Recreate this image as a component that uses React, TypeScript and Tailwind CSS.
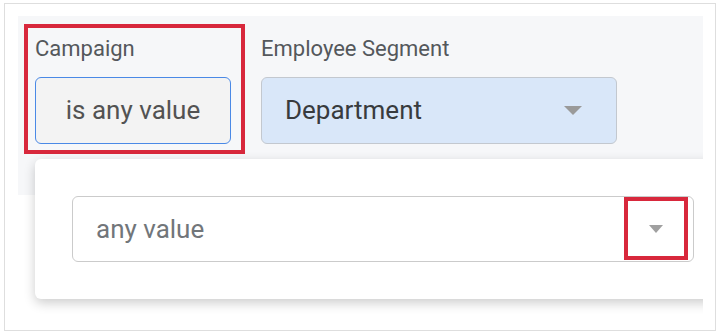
export default function App() {
  const font = { fontFamily: "Roboto, 'Noto Sans', sans-serif" };
  return (
    <div className="w-[720px] h-[334px] bg-white pt-[3px] pl-[4px]" style={font}>
      <div className="w-[712px] h-[328px] border border-[#dedede] pt-[12px] pl-[13px]">
        <div className="relative w-[685px] h-[304px] overflow-hidden bg-white">
          {/* gray filter bar */}
          <div className="h-[179px] bg-[#f6f7f9] pt-[8px] pl-[6px] flex items-start gap-[16px]">
            {/* Campaign (annotated) */}
            <div className="w-[221px] h-[130px] border-[4px] border-[#d8283c] pt-[8px] pl-[7px]">
              <div className="text-[22px] leading-[26px] text-[#54585c] mb-[15px]">Campaign</div>
              <div className="w-[196px] h-[67px] rounded-[6px] border border-[#4a89e6] bg-[#f3f3f3] flex items-center justify-center text-[26px] text-[#525252]">
                is any value
              </div>
            </div>
            {/* Employee Segment */}
            <div className="pt-[12px]">
              <div className="text-[22px] leading-[26px] text-[#54585c] mb-[15px]">Employee Segment</div>
              <div className="w-[356px] h-[67px] rounded-[6px] border border-[#c3c8cf] bg-[#d9e7f9] flex items-center justify-between pl-[23px] pr-[34px] text-[26px] text-[#383b3e]">
                <span>Department</span>
                <svg width="18" height="9" viewBox="0 0 18 9" className="block">
                  <path d="M0 0 L18 0 L9 9 Z" fill="#9a9a9a" />
                </svg>
              </div>
            </div>
          </div>
          {/* popup */}
          <div className="absolute left-[17px] top-[143px] w-[696px] h-[140px] rounded-[6px] bg-white shadow-[0_4px_12px_rgba(0,0,0,0.2)] p-[37px]">
            <div className="relative w-[622px] h-[66px] rounded-[6px] border border-[#cbcbcb] flex items-center pl-[23px] text-[26px] text-[#72767a]">
              <span>any value</span>
              <div className="absolute right-[5px] top-0 w-[64px] h-[63px] border-[4px] border-[#d8283c] flex items-center justify-center">
                <svg width="14" height="8" viewBox="0 0 14 8" className="block">
                  <path d="M0 0 L14 0 L7 8 Z" fill="#a0a0a0" />
                </svg>
              </div>
            </div>
          </div>
        </div>
      </div>
    </div>
  );
}
